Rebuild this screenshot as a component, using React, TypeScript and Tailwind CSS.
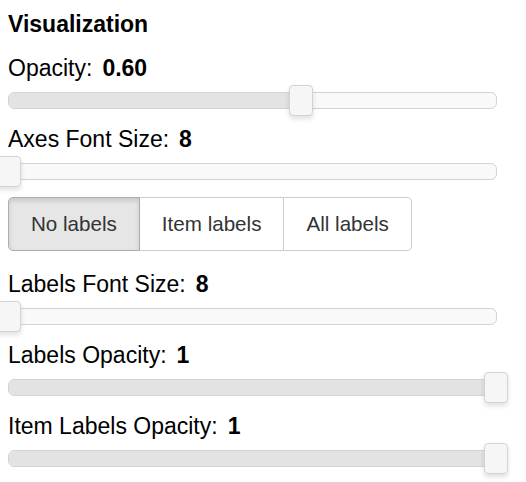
import { useState } from "react";

interface SliderRowProps {
  label: string;
  value: string;
  pct: number;
}

function Slider({ pct }: { pct: number }) {
  return (
    <div className="relative mt-[11px] h-[17px] rounded-[6px] border border-[#d3d3d3] bg-[#f9f9f9]">
      <div
        className="absolute left-0 top-0 bottom-0 rounded-l-[5px] bg-[#e3e3e3]"
        style={{ width: `${pct}%` }}
      />
      <div
        className="absolute top-[-8px] h-[31px] w-[24px] rounded-[4px] border border-[#d3d3d3] bg-[#f6f6f6] shadow-[0_3px_5px_rgba(0,0,0,0.12)]"
        style={{ left: `calc(${pct}% - 12px)` }}
      />
    </div>
  );
}

function SliderRow({ label, value, pct }: SliderRowProps) {
  return (
    <div className="mb-[17px]">
      <div className="flex h-[26px] items-center leading-[26px] text-black">
        <span>{label}</span>
        <span className="ml-[10px] font-bold">{value}</span>
      </div>
      <Slider pct={pct} />
    </div>
  );
}

export default function App() {
  const [mode, setMode] = useState("none");
  const modes = [
    { id: "none", text: "No labels" },
    { id: "item", text: "Item labels" },
    { id: "all", text: "All labels" },
  ];

  return (
    <div
      className="min-h-[482px] bg-white pt-[11px] pl-2 text-[23px]"
      style={{ fontFamily: '"Liberation Sans", Arial, sans-serif' }}
    >
      <div className="w-[489px]">
        <h3 className="mb-[18px] h-[26px] leading-[26px] font-bold text-black">Visualization</h3>

        <SliderRow label="Opacity:" value="0.60" pct={60} />
        <SliderRow label="Axes Font Size:" value="8" pct={0} />

        {/* Label mode buttons */}
        <div className="mb-[20px] flex">
          {modes.map((m, i) => (
            <button
              key={m.id}
              onClick={() => setMode(m.id)}
              className={`h-[54px] border px-[22px] text-[20.6px] text-[#333] ${
                i === 0 ? "rounded-l-[5px]" : "-ml-px"
              } ${i === modes.length - 1 ? "rounded-r-[5px]" : ""} ${
                mode === m.id
                  ? "z-10 border-[#adadad] bg-[#e6e6e6] shadow-[inset_0_3px_5px_rgba(0,0,0,0.125)]"
                  : "border-[#cccccc] bg-white"
              }`}
            >
              {m.text}
            </button>
          ))}
        </div>

        <SliderRow label="Labels Font Size:" value="8" pct={0} />
        <SliderRow label="Labels Opacity:" value="1" pct={100} />
        <SliderRow label="Item Labels Opacity:" value="1" pct={100} />
      </div>
    </div>
  );
}
